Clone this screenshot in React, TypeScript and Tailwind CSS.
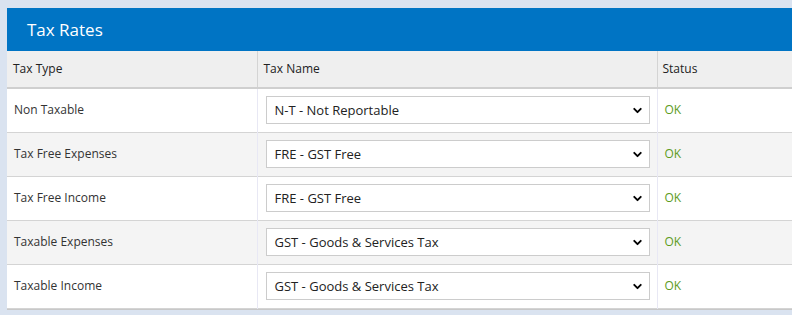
import { ChevronDown } from 'lucide-react'

const rows = [
  { type: 'Non Taxable', name: 'N-T - Not Reportable' },
  { type: 'Tax Free Expenses', name: 'FRE - GST Free' },
  { type: 'Tax Free Income', name: 'FRE - GST Free' },
  { type: 'Taxable Expenses', name: 'GST - Goods & Services Tax' },
  { type: 'Taxable Income', name: 'GST - Goods & Services Tax' },
]

export default function App() {
  return (
    <div className="min-h-[315px] bg-[#dae3f0] pl-[7px] pt-[8px] font-['Open_Sans',sans-serif] overflow-hidden">
      <div className="w-[800px] bg-white shadow-[0_1px_0_#c8c8c8]">
        <div className="h-[43px] bg-[#0074c4] flex items-center pl-[20px]">
          <h1 className="text-white text-[17px] leading-none">Tax Rates</h1>
        </div>
        <table className="w-full table-fixed border-collapse text-[12px] text-[#333]">
          <colgroup>
            <col className="w-[250px]" />
            <col className="w-[400px]" />
            <col />
          </colgroup>
          <thead>
            <tr className="h-[37px] bg-[#efefef] border-b-2 border-[#cfcfcf] text-[#222]">
              <th className="font-normal text-left pl-[6px]">Tax Type</th>
              <th className="font-normal text-left pl-[6px] border-l border-[#d4d4d4]">Tax Name</th>
              <th className="font-normal text-left pl-[5px] border-l border-[#d4d4d4]">Status</th>
            </tr>
          </thead>
          <tbody>
            {rows.map((r, i) => (
              <tr key={i} className={`h-[44px] border-b border-[#d4d4d4] ${i % 2 === 1 ? 'bg-[#f4f4f4]' : 'bg-white'}`}>
                <td className="pl-[7px] pb-[1px]">{r.type}</td>
                <td className="pl-[8px] pr-[7px] border-l border-[#e8e8f4]">
                  <div className="relative h-[28px] bg-white border border-[#cccccc] flex items-center pl-[8px] pt-[1px] text-[13px] text-[#222]">
                    <span>{r.name}</span>
                    <ChevronDown className="absolute right-[5px] top-[7px] w-[13px] h-[13px] text-black" strokeWidth={3.5} />
                  </div>
                </td>
                <td className="pl-[7px] border-l border-[#e8e8f4] text-[#5e9c1c]">OK</td>
              </tr>
            ))}
          </tbody>
        </table>
      </div>
    </div>
  )
}
